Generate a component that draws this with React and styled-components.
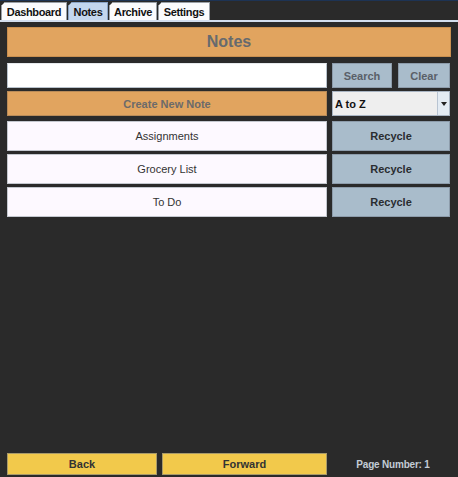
import React from "react";
import styled, { createGlobalStyle } from "styled-components";

const Global = createGlobalStyle`
  html, body { margin: 0; padding: 0; background: #2a2a2a; }
  body { font-family: "Liberation Sans", Arial, sans-serif; }
  * { box-sizing: border-box; }
`;

const Frame = styled.div`
  width: 458px;
  height: 477px;
  display: flex;
  flex-direction: column;
  background: #2a2a2a;
  border-top: 1px solid #1d3354;
`;

const TabStrip = styled.div`
  display: flex;
  align-items: flex-end;
  height: 21px;
  padding-left: 1px;
  border-bottom: 2px solid #d3deee;
`;

const Tab = styled.div`
  width: ${(p) => p.$w}px;
  height: 18px;
  display: flex;
  align-items: center;
  justify-content: center;
  font-size: 11px;
  font-weight: bold;
  letter-spacing: -0.35px;
  color: #111;
  background: ${(p) => (p.$active ? "#c3d6ee" : "#fbfbfd")};
  border: 1px solid ${(p) => (p.$active ? "#8aa4c8" : "#9aa0a8")};
  border-bottom: none;
  clip-path: polygon(4px 0, 100% 0, 100% 100%, 0 100%, 0 4px);
  margin-right: 1px;
`;

const Content = styled.div`
  flex: 1;
  display: flex;
  flex-direction: column;
  padding: 5px 7px 2px 7px;
`;

const Header = styled.div`
  height: 30px;
  background: #e1a45f;
  border: 1px solid #c98f4f;
  display: flex;
  align-items: center;
  justify-content: center;
  font-size: 16px;
  font-weight: bold;
  color: #666a6e;
`;

const Grid = styled.div`
  display: grid;
  grid-template-columns: 320px 118px;
  column-gap: 5px;
  row-gap: ${(p) => p.$gap}px;
  margin-top: ${(p) => p.$top}px;
`;

const Input = styled.div`
  height: 25px;
  background: #fff;
  border: 1px solid #b8c2cc;
  border-top-color: #e6e9ec;
`;

const ButtonPair = styled.div`
  display: grid;
  grid-template-columns: 60px 52px;
  column-gap: 6px;
`;

const Btn = styled.div`
  height: ${(p) => p.$h || 25}px;
  display: flex;
  align-items: center;
  justify-content: center;
  font-size: 11px;
  font-weight: bold;
  color: ${(p) => p.$color || "#5a6068"};
  background: ${(p) => p.$bg};
  border: 1px solid ${(p) => p.$border || "#8d9cab"};
`;

const Combo = styled.div`
  height: 25px;
  display: flex;
  background: #eeeeee;
  border: 1px solid #a8b4c2;
`;

const ComboText = styled.div`
  flex: 1;
  display: flex;
  align-items: center;
  padding-left: 2px;
  font-size: 11px;
  font-weight: bold;
  color: #111;
`;

const ComboArrow = styled.div`
  width: 12px;
  display: flex;
  align-items: center;
  justify-content: center;
  background: #e3ebf3;
  border-left: 1px solid #b8c4d2;
  &::after {
    content: "";
    border-left: 3.5px solid transparent;
    border-right: 3.5px solid transparent;
    border-top: 4px solid #222;
  }
`;

const NoteItem = styled.div`
  height: 30px;
  display: flex;
  align-items: center;
  justify-content: center;
  font-size: 11px;
  color: #333;
  background: #fdf9ff;
  border: 1px solid #c4c8cf;
`;

const Spacer = styled.div`
  flex: 1;
`;

const Footer = styled.div`
  display: grid;
  grid-template-columns: 150px 165px 118px;
  column-gap: 5px;
  align-items: center;
`;

const PageLabel = styled.div`
  font-size: 10px;
  font-weight: bold;
  color: #c3ccd6;
  text-align: center;
  padding-left: 4px;
  letter-spacing: -0.2px;
`;

const notes = ["Assignments", "Grocery List", "To Do"];

const tabs = [
  { label: "Dashboard", w: 66 },
  { label: "Notes", w: 40, active: true },
  { label: "Archive", w: 48 },
  { label: "Settings", w: 52 },
];

export default function App() {
  return (
    <>
      <Global />
      <Frame>
        <TabStrip>
          {tabs.map((t) => (
            <Tab key={t.label} $w={t.w} $active={t.active}>
              {t.label}
            </Tab>
          ))}
        </TabStrip>
        <Content>
          <Header>Notes</Header>
          <Grid $top={6} $gap={3}>
            <Input />
            <ButtonPair>
              <Btn $bg="#a9bccb">Search</Btn>
              <Btn $bg="#a9bccb">Clear</Btn>
            </ButtonPair>
            <Btn $bg="#e1a45f" $border="#b98b58" $color="#6b6a6a">
              Create New Note
            </Btn>
            <Combo>
              <ComboText>A to Z</ComboText>
              <ComboArrow />
            </Combo>
          </Grid>
          <Grid $top={5} $gap={3}>
            {notes.map((n) => (
              <React.Fragment key={n}>
                <NoteItem>{n}</NoteItem>
                <Btn $h={30} $bg="#a9bccb" $color="#2a2d31">
                  Recycle
                </Btn>
              </React.Fragment>
            ))}
          </Grid>
          <Spacer />
          <Footer>
            <Btn $h={22} $bg="#f2c94b" $border="#a89a6a" $color="#333">
              Back
            </Btn>
            <Btn $h={22} $bg="#f2c94b" $border="#a89a6a" $color="#333">
              Forward
            </Btn>
            <PageLabel>Page Number: 1</PageLabel>
          </Footer>
        </Content>
      </Frame>
    </>
  );
}
